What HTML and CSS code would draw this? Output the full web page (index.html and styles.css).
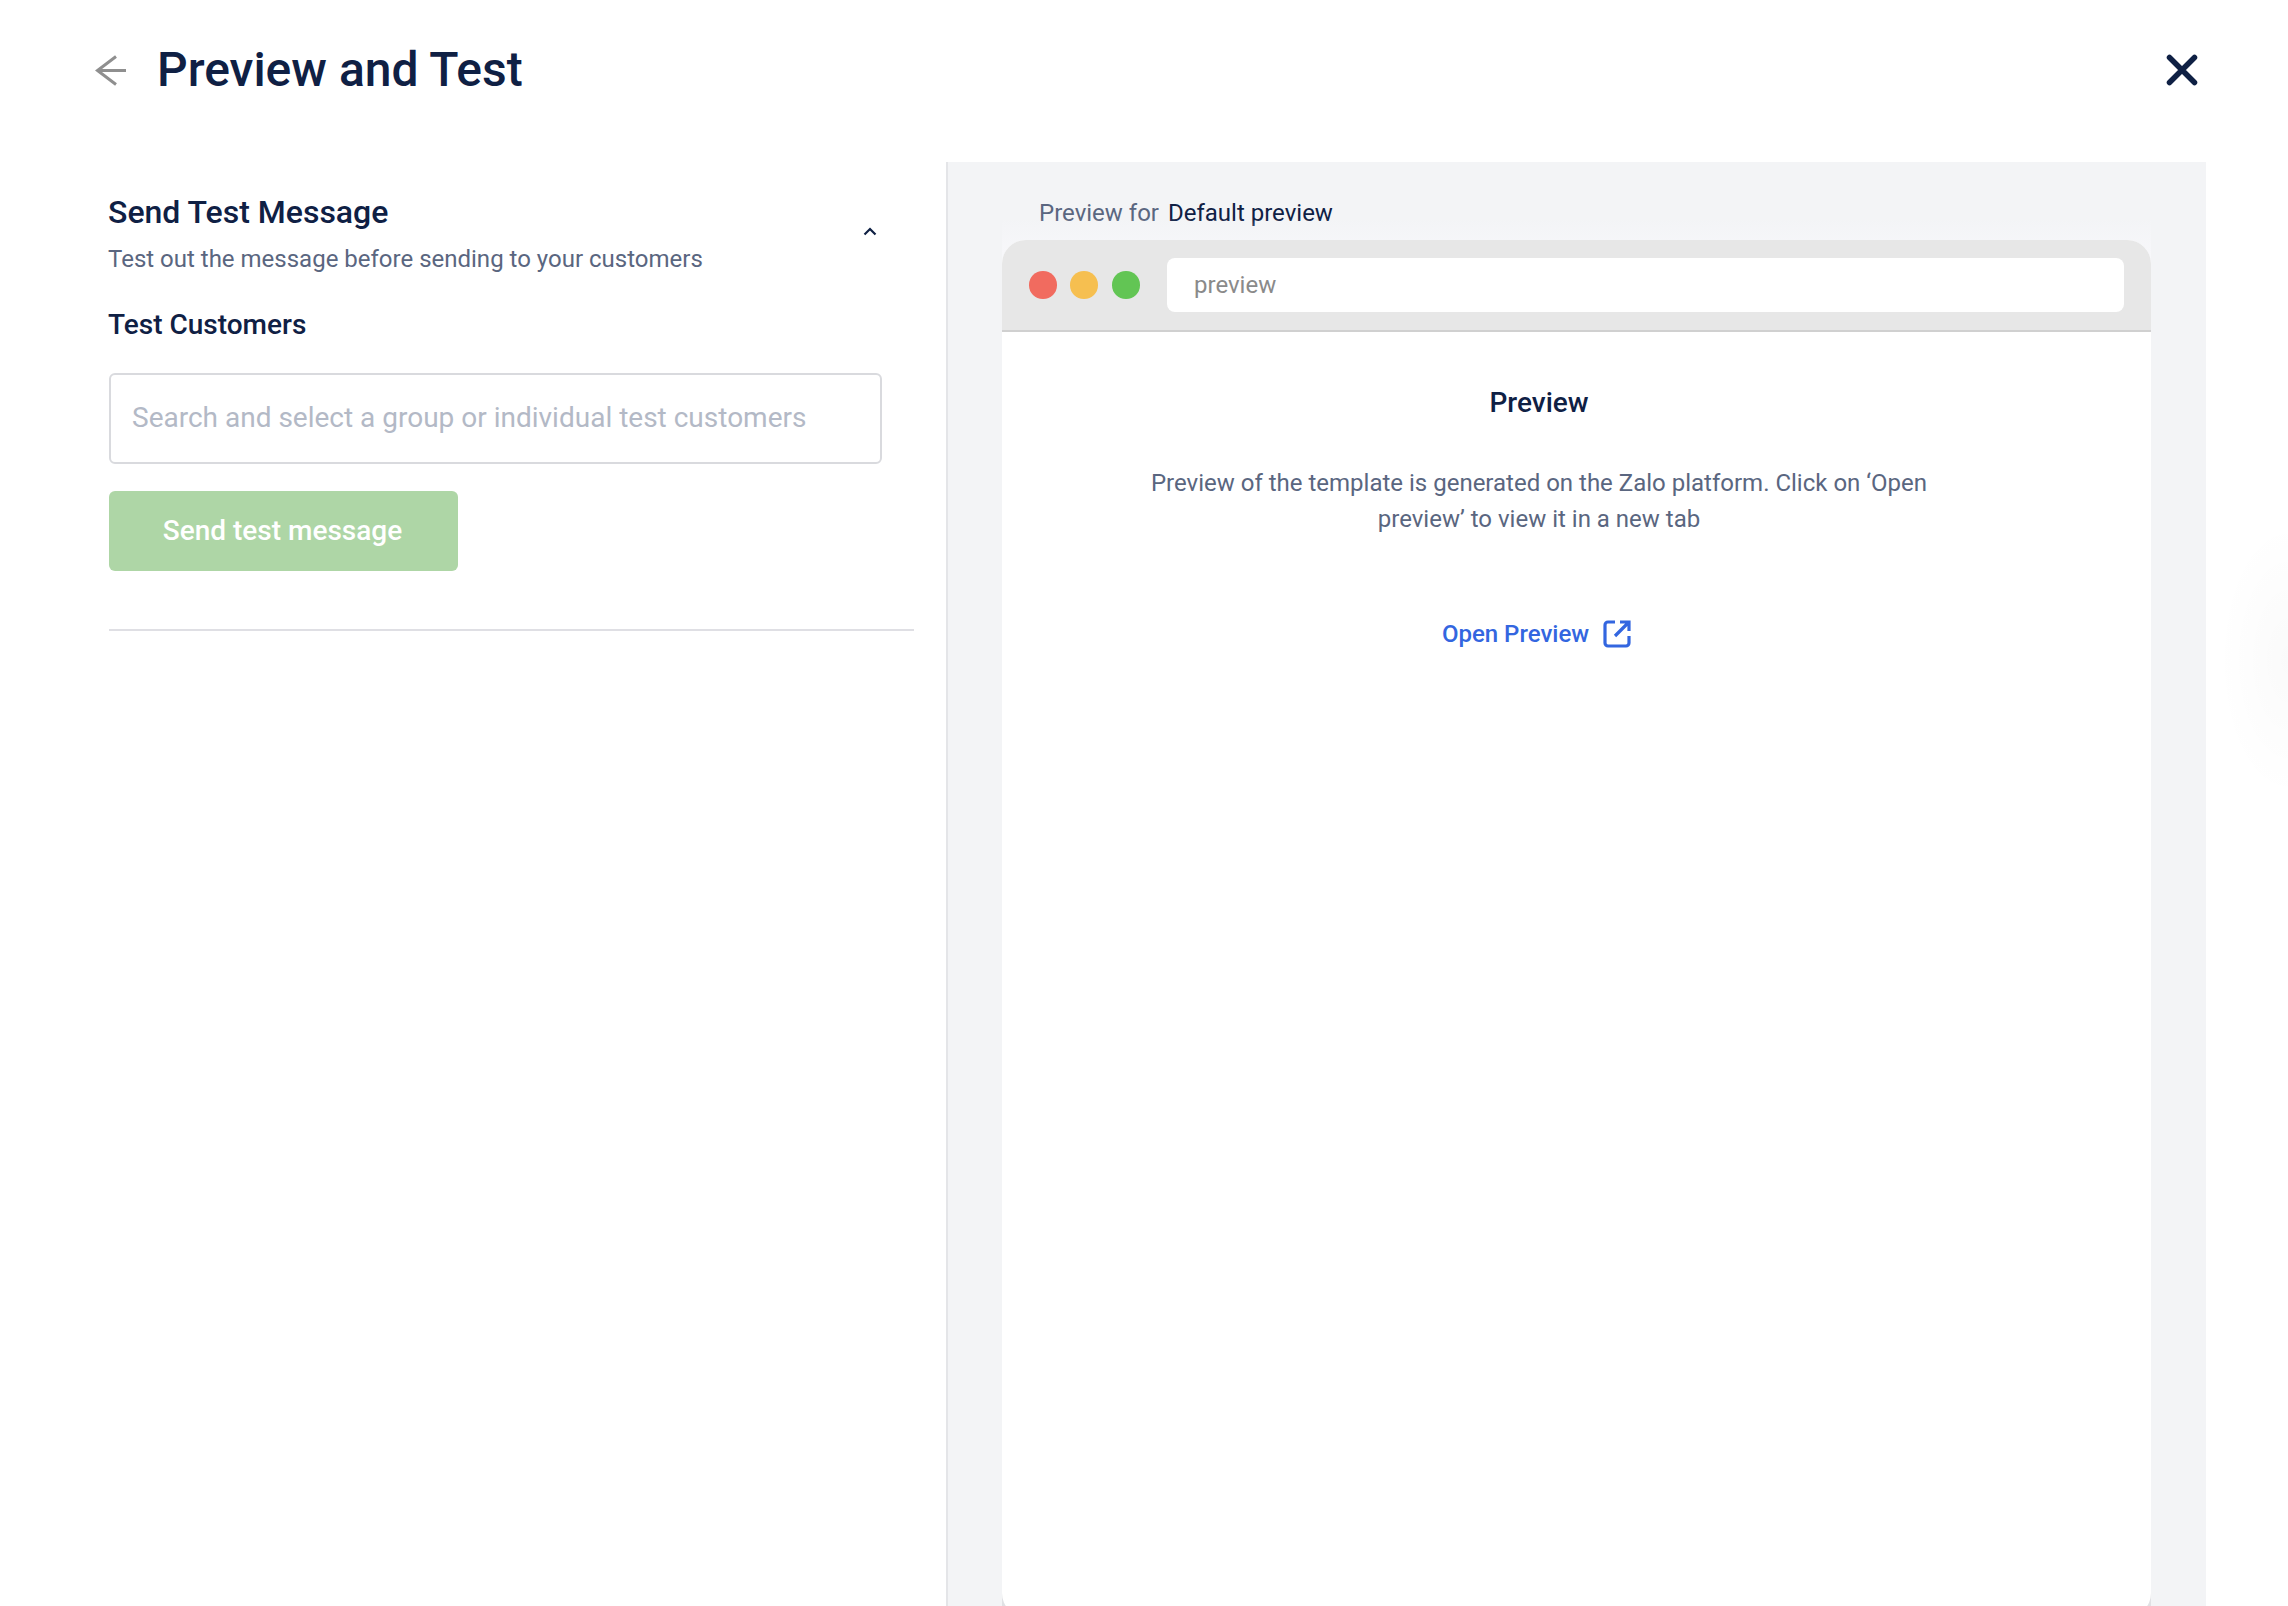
FILE: index.html
```html
<!DOCTYPE html>
<html lang="en">
<head>
<meta charset="utf-8">
<title>Preview and Test</title>
<link rel="stylesheet" href="styles.css">
</head>
<body>
<div class="page">
  <header class="topbar">
    <div class="topbar-left">
      <svg class="back" width="34" height="33" viewBox="0 0 34 33"><path d="M32 16.500H3.500M22 2.500 3.500 16.500 22 30.500" fill="none" stroke="#8f8f8f" stroke-width="3"/></svg>
      <h1 class="title">Preview and Test</h1>
    </div>
    <svg class="close" width="32" height="32" viewBox="0 0 32 32"><path d="M3.500 3.500 28.500 28.500M28.500 3.500 3.500 28.500" fill="none" stroke="#0f2044" stroke-width="5.500" stroke-linecap="round"/></svg>
  </header>
  <main class="content">
    <section class="left">
      <div class="section-head">
        <div>
          <h2 class="section-title">Send Test Message</h2>
          <p class="section-sub">Test out the message before sending to your customers</p>
        </div>
        <svg class="chevron" width="14" height="9" viewBox="0 0 14 9"><path d="M1.500 7.500 7 2l5.500 5.500" fill="none" stroke="#0f2044" stroke-width="2.200"/></svg>
      </div>
      <h3 class="field-label">Test Customers</h3>
      <div class="search">Search and select a group or individual test customers</div>
      <button class="send">Send test message</button>
      <hr class="rule">
    </section>
    <section class="right">
      <p class="for"><span class="for-label">Preview for</span><span class="for-value">Default preview</span></p>
      <div class="browser-wrap">
        <div class="browser">
          <div class="chrome">
            <div class="dots"><span class="dot red"></span><span class="dot yellow"></span><span class="dot green"></span></div>
            <div class="url">preview</div>
          </div>
          <div class="viewport">
            <h4 class="vp-title">Preview</h4>
            <p class="vp-text">Preview of the template is generated on the Zalo platform. Click on ‘Open preview’ to view it in a new tab</p>
            <a class="open">Open Preview
              <svg width="28" height="28" viewBox="0 0 28 28"><path d="M12 2H5a3 3 0 0 0-3 3v18a3 3 0 0 0 3 3h18a3 3 0 0 0 3-3v-7M12 16 26 2M17 2h9v9" fill="none" stroke="#3366e0" stroke-width="3.200"/></svg>
            </a>
          </div>
        </div>
      </div>
    </section>
  </main>
</div>
</body>
</html>
```
FILE: styles.css
```css
* { box-sizing: border-box; }
html, body { margin: 0; height: 100%; overflow: hidden; background: #fff; }
body { font-family: Roboto, "Liberation Sans", sans-serif; color: #0f2044; }
h1, h2, h3, h4, p { margin: 0; }
.page { position: relative; width: 2288px; height: 1606px; display: flex; flex-direction: column; overflow: hidden; }
.page::after { content: ""; position: absolute; right: 0; top: 520px; width: 70px; height: 280px; background: radial-gradient(ellipse 100% 50% at right center, rgba(0,0,0,.018), transparent); }
.topbar { height: 162px; flex: none; display: flex; align-items: flex-start; justify-content: space-between; padding: 39px 90px 0 94px; }
.topbar-left { display: flex; align-items: center; gap: 29px; }
.back { flex: none; }
.title { font-size: 48px; line-height: 62px; font-weight: 500; }
.close { margin-top: 15px; }
.content { flex: 1; display: flex; padding-right: 82px; min-height: 0; }
.left { width: 946px; flex: none; padding: 29px 0 0 109px; }
.section-head { width: 769px; margin-left: -1px; display: flex; justify-content: space-between; align-items: center; }
.section-title { font-size: 32px; line-height: 42px; font-weight: 500; }
.section-sub { font-size: 24px; line-height: 32px; color: #5a6680; margin-top: 10px; }
.chevron { margin-bottom: 4px; }
.field-label { font-size: 28px; line-height: 36px; font-weight: 500; margin: 32px 0 0 -1px; }
.search { width: 773px; height: 91px; margin-top: 30px; border: 2px solid #d9dade; border-radius: 6px; padding: 0 21px 2px; display: flex; align-items: center; font-size: 28px; color: #b3b9c6; }
.send { display: block; width: 349px; height: 80px; margin-top: 27px; padding: 0 2px 2px 0; border: 0; border-radius: 6px; background: #aed6a6; color: #fff; font: 500 28px Roboto, sans-serif; }
.rule { width: 805px; height: 2px; margin: 58px 0 0; border: 0; background: #dfdfe4; }
.right { flex: 1; background: #f3f4f6; border-left: 2px solid #e4e5e8; padding: 35px 55px 0 54px; display: flex; flex-direction: column; min-width: 0; }
.for { font-size: 24px; line-height: 32px; padding-left: 37px; display: flex; gap: 9px; }
.for-label { color: #5a6680; }
.browser-wrap { position: relative; flex: 1; margin-top: 11px; margin-bottom: -11px; min-height: 0; }
.browser-wrap::before { content: ""; position: absolute; left: 0; right: 0; top: -22px; height: 46px; background: linear-gradient(to bottom, rgba(248,248,251,0), #f8f8fb); }
.browser-wrap::after { content: ""; position: absolute; left: 0; right: 0; bottom: 0; height: 24px; background: #e0e1e4; }
.browser { position: relative; z-index: 1; height: 100%; border-radius: 24px; background: #fff; display: flex; flex-direction: column; overflow: hidden; }
.chrome { height: 92px; flex: none; background: #e7e7e7; border-bottom: 2px solid #d0d0d0; display: flex; align-items: center; padding: 0 27px 0 28px; }
.dots { display: flex; gap: 13.5px; width: 137px; flex: none; margin-left: -1px; }
.dot { width: 27.500px; height: 27.500px; border-radius: 50%; }
.red { background: #f16b5f; }
.yellow { background: #f6bf50; }
.green { background: #62c554; margin-left: 1px; }
.url { flex: 1; height: 54px; margin-left: 1px; border-radius: 8px; background: #fff; display: flex; align-items: center; padding-left: 27px; font-size: 24px; color: #8a8a8a; }
.viewport { flex: 1; width: 1074px; display: flex; flex-direction: column; align-items: center; padding-top: 53px; }
.vp-title { font-size: 28px; line-height: 36px; font-weight: 500; }
.vp-text { width: 800px; margin-top: 44px; font-size: 24px; line-height: 36px; color: #5a6680; text-align: center; }
.open { display: flex; align-items: center; gap: 14px; margin-top: 83px; padding-right: 5px; font-size: 24px; font-weight: 500; color: #3366e0; }
```
